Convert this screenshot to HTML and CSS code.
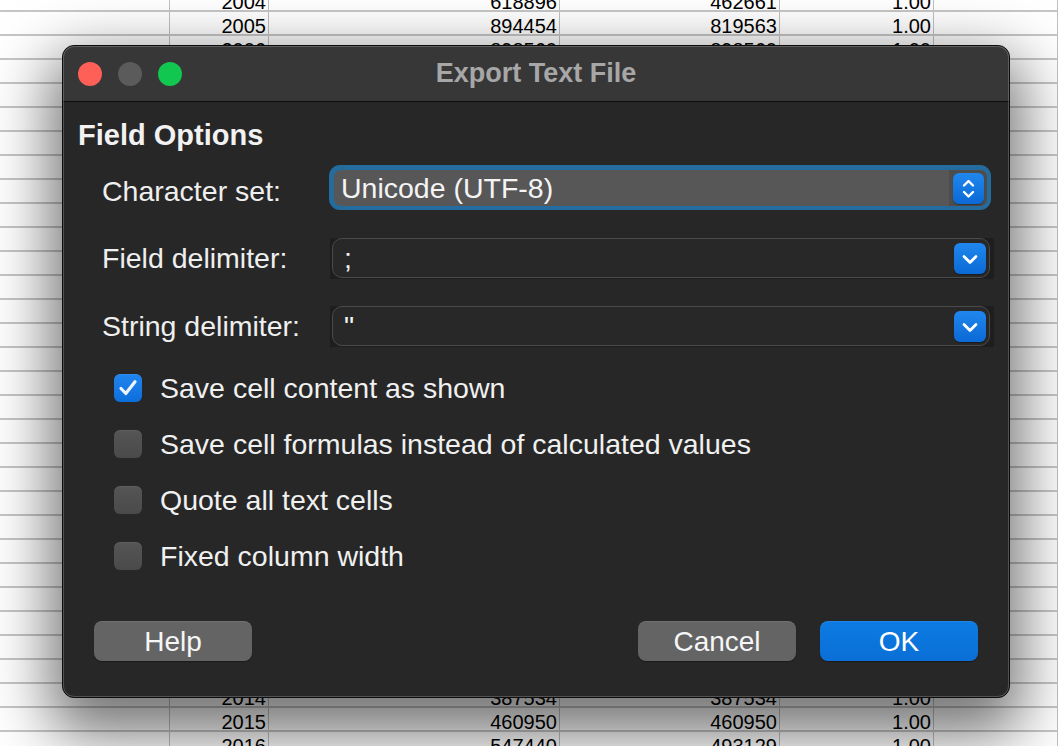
FILE: index.html
```html
<!DOCTYPE html>
<html lang="en">
<head>
<meta charset="utf-8">
<title>Export Text File</title>
<link rel="stylesheet" href="styles.css">
</head>
<body>
<div class="sheet">
  <div class="row"><i></i><i>2004</i><i>618896</i><i>462661</i><i>1.00</i><i></i></div>
  <div class="row"><i></i><i>2005</i><i>894454</i><i>819563</i><i>1.00</i><i></i></div>
  <div class="row"><i></i><i>2006</i><i>898560</i><i>898560</i><i>1.00</i><i></i></div>
  <div class="row"><i></i><i></i><i></i><i></i><i></i><i></i></div>
  <div class="row"><i></i><i></i><i></i><i></i><i></i><i></i></div>
  <div class="row"><i></i><i></i><i></i><i></i><i></i><i></i></div>
  <div class="row"><i></i><i></i><i></i><i></i><i></i><i></i></div>
  <div class="row"><i></i><i></i><i></i><i></i><i></i><i></i></div>
  <div class="row"><i></i><i></i><i></i><i></i><i></i><i></i></div>
  <div class="row"><i></i><i></i><i></i><i></i><i></i><i></i></div>
  <div class="row"><i></i><i></i><i></i><i></i><i></i><i></i></div>
  <div class="row"><i></i><i></i><i></i><i></i><i></i><i></i></div>
  <div class="row"><i></i><i></i><i></i><i></i><i></i><i></i></div>
  <div class="row"><i></i><i></i><i></i><i></i><i></i><i></i></div>
  <div class="row"><i></i><i></i><i></i><i></i><i></i><i></i></div>
  <div class="row"><i></i><i></i><i></i><i></i><i></i><i></i></div>
  <div class="row"><i></i><i></i><i></i><i></i><i></i><i></i></div>
  <div class="row"><i></i><i></i><i></i><i></i><i></i><i></i></div>
  <div class="row"><i></i><i></i><i></i><i></i><i></i><i></i></div>
  <div class="row"><i></i><i></i><i></i><i></i><i></i><i></i></div>
  <div class="row"><i></i><i></i><i></i><i></i><i></i><i></i></div>
  <div class="row"><i></i><i></i><i></i><i></i><i></i><i></i></div>
  <div class="row"><i></i><i></i><i></i><i></i><i></i><i></i></div>
  <div class="row"><i></i><i></i><i></i><i></i><i></i><i></i></div>
  <div class="row"><i></i><i></i><i></i><i></i><i></i><i></i></div>
  <div class="row"><i></i><i></i><i></i><i></i><i></i><i></i></div>
  <div class="row"><i></i><i></i><i></i><i></i><i></i><i></i></div>
  <div class="row"><i></i><i></i><i></i><i></i><i></i><i></i></div>
  <div class="row"><i></i><i></i><i></i><i></i><i></i><i></i></div>
  <div class="row"><i></i><i>2014</i><i>387534</i><i>387534</i><i>1.00</i><i></i></div>
  <div class="row"><i></i><i>2015</i><i>460950</i><i>460950</i><i>1.00</i><i></i></div>
  <div class="row"><i></i><i>2016</i><i>547440</i><i>493129</i><i>1.00</i><i></i></div>
</div>

<div class="dialog">
  <div class="titlebar">
    <div class="lights">
      <span class="light light-red"></span>
      <span class="light light-gray"></span>
      <span class="light light-green"></span>
    </div>
    <div class="title">Export Text File</div>
    <div></div>
  </div>
  <div class="body">
    <h2 class="section">Field Options</h2>
    <div class="form">
      <div class="frow frow-first">
        <label class="flabel flabel-first">Character set:</label>
        <div class="focus-ring">
          <div class="popup-field">
            <span class="ptext">Unicode (UTF-8)</span>
            <span class="stepper-well">
              <span class="bluebtn stepper">
                <svg width="31" height="31" viewBox="0 0 31 31"><path d="M11 12.5 L15.5 8 L20 12.5 M11 19 L15.5 23.5 L20 19" fill="none" stroke="#fff" stroke-width="2.4" stroke-linecap="round" stroke-linejoin="round"/></svg>
              </span>
            </span>
          </div>
        </div>
      </div>
      <div class="frow">
        <label class="flabel">Field delimiter:</label>
        <div class="popup-plain">
          <div class="popup-box">
            <span class="ptext ptext-plain">;</span>
            <span class="bluebtn chevron">
              <svg width="32" height="31" viewBox="0 0 32 31"><path d="M10 13.5 L16 19.5 L22 13.5" fill="none" stroke="#fff" stroke-width="2.8" stroke-linecap="round" stroke-linejoin="round"/></svg>
            </span>
          </div>
        </div>
      </div>
      <div class="frow">
        <label class="flabel">String delimiter:</label>
        <div class="popup-plain">
          <div class="popup-box">
            <span class="ptext ptext-plain">"</span>
            <span class="bluebtn chevron">
              <svg width="32" height="31" viewBox="0 0 32 31"><path d="M10 13.5 L16 19.5 L22 13.5" fill="none" stroke="#fff" stroke-width="2.8" stroke-linecap="round" stroke-linejoin="round"/></svg>
            </span>
          </div>
        </div>
      </div>
    </div>

    <div class="checks">
      <div class="check">
        <span class="box box-on">
          <svg width="28" height="28" viewBox="0 0 28 28"><path d="M7 14.5 L11.8 19.5 L21 7.8" fill="none" stroke="#eef4ff" stroke-width="3.2" stroke-linecap="round" stroke-linejoin="round"/></svg>
        </span>
        <span class="ctext">Save cell content as shown</span>
      </div>
      <div class="check">
        <span class="box"></span>
        <span class="ctext">Save cell formulas instead of calculated values</span>
      </div>
      <div class="check">
        <span class="box"></span>
        <span class="ctext">Quote all text cells</span>
      </div>
      <div class="check">
        <span class="box"></span>
        <span class="ctext">Fixed column width</span>
      </div>
    </div>

    <div class="buttons">
      <button class="btn">Help</button>
      <span class="spacer"></span>
      <button class="btn">Cancel</button>
      <button class="btn btn-primary">OK</button>
    </div>
  </div>
</div>
</body>
</html>
```

FILE: styles.css
```css
html, body {
  margin: 0;
  padding: 0;
}
body {
  width: 1058px;
  height: 746px;
  overflow: hidden;
  background: #ffffff;
  font-family: "Liberation Sans", Arial, sans-serif;
  position: relative;
}

/* spreadsheet behind */
.sheet {
  margin-top: -12px;
}
.row {
  display: grid;
  grid-template-columns: 170px 99px 291px 220px 154px 1fr;
  height: 24px;
  box-sizing: border-box;
  border-bottom: 2px solid #c6c6c6;
}
.row > i {
  font-style: normal;
  border-right: 1px solid #c0c0c0;
  text-align: right;
  padding: 4px 2px 0 0;
  font-size: 20px;
  line-height: 20px;
  color: #000;
  white-space: nowrap;
  overflow: hidden;
}

/* dialog window */
.dialog {
  position: absolute;
  left: 62px;
  top: 45px;
  width: 948px;
  height: 653px;
  box-sizing: border-box;
  border: 1px solid #0c0c0c;
  border-radius: 12px;
  background: #272727;
  overflow: hidden;
  display: flex;
  flex-direction: column;
  box-shadow: 0 24px 60px 12px rgba(0, 0, 0, 0.55);
}
.dialog::after {
  content: "";
  position: absolute;
  inset: 0;
  border-radius: 11px;
  box-shadow: inset 0 0 0 1px rgba(255, 255, 255, 0.2);
  pointer-events: none;
}

.titlebar {
  height: 56px;
  flex: none;
  box-sizing: border-box;
  background: #373737;
  border-bottom: 1px solid #0e0e0e;
  display: grid;
  grid-template-columns: 1fr auto 1fr;
  align-items: center;
  padding-left: 15px;
  padding-right: 15px;
}
.lights {
  display: flex;
  gap: 16px;
}
.light {
  width: 24px;
  height: 24px;
  border-radius: 50%;
}
.light-red { background: #fe5f57; }
.light-gray { background: #5b5b5b; }
.light-green { background: #11c74f; }
.title {
  font-size: 27px;
  font-weight: bold;
  color: #a7a7a7;
  line-height: 32px;
  padding-bottom: 2px;
}

.body {
  padding: 16px 0 0 15px;
  color: #f0f0f0;
}
.section {
  margin: 0;
  font-size: 29px;
  line-height: 34px;
  font-weight: bold;
  color: #f2f2f2;
}

.form {
  margin: 13px 0 0 24px;
  display: flex;
  flex-direction: column;
  gap: 26px;
}
.frow {
  display: flex;
  align-items: flex-start;
  height: 42px;
}
.frow-first {
  height: 46px;
}
.flabel {
  width: 228px;
  flex: none;
  font-size: 28.5px;
  line-height: 32px;
  margin-top: 5px;
  color: #efefef;
  white-space: nowrap;
}
.flabel-first {
  margin-top: 10px;
}

.focus-ring {
  flex: none;
  margin-left: -1px;
  width: 662px;
  height: 45px;
  box-sizing: border-box;
  padding: 5px 4px 4px 5px;
  border-radius: 11px;
  background: #246c9d;
}
.popup-field {
  height: 36px;
  border-radius: 7px;
  background: #575757;
  display: flex;
  align-items: center;
  overflow: hidden;
}
.ptext {
  flex: 1;
  font-size: 28.5px;
  line-height: 32px;
  color: #f4f4f4;
  padding-left: 7px;
  white-space: nowrap;
}
.stepper-well {
  flex: none;
  width: 38px;
  height: 36px;
  background: #4d4d4d;
  display: flex;
  align-items: center;
  justify-content: flex-start;
  padding-left: 4px;
  box-sizing: border-box;
}
.bluebtn {
  flex: none;
  display: flex;
  border-radius: 6px;
  background: linear-gradient(#2087ee, #0b69d5);
  box-shadow: 0 1px 1px rgba(0, 0, 0, 0.35);
}
.stepper {
  width: 31px;
  height: 31px;
}
.chevron {
  width: 32px;
  height: 31px;
  margin-right: 3px;
}

.popup-plain {
  flex: none;
  margin-top: 1px;
  width: 664px;
  height: 41px;
  box-sizing: border-box;
  padding: 0 4px 1px 2px;
  background: #1e1e1e;
}
.popup-box {
  height: 40px;
  box-sizing: border-box;
  border: 1px solid #4a4a4a;
  border-radius: 10px;
  background: #282828;
  display: flex;
  align-items: center;
}
.ptext-plain {
  padding-left: 11px;
}

.checks {
  margin: 27px 0 0 36px;
  display: flex;
  flex-direction: column;
  gap: 28px;
}
.check {
  display: flex;
  align-items: center;
  height: 28px;
}
.box {
  width: 28px;
  height: 28px;
  flex: none;
  box-sizing: border-box;
  border-radius: 6px;
  background: linear-gradient(#555555, #4a4a4a);
  box-shadow: inset 0 1px 0 rgba(255, 255, 255, 0.06);
  display: flex;
}
.box-on {
  background: linear-gradient(#2185ee, #0d6edb);
}
.ctext {
  margin-left: 18px;
  font-size: 28.5px;
  line-height: 32px;
  color: #f0f0f0;
  white-space: nowrap;
}

.buttons {
  margin-top: 51px;
  padding: 0 31px 0 16px;
  display: flex;
  gap: 24px;
}
.spacer {
  flex: 1;
}
.btn {
  flex: none;
  width: 158px;
  height: 40px;
  border: none;
  border-radius: 8px;
  background: #646464;
  box-shadow: inset 0 1px 0 rgba(255, 255, 255, 0.08), 0 1px 1px rgba(0, 0, 0, 0.3);
  color: #f6f6f6;
  font-family: "Liberation Sans", Arial, sans-serif;
  font-size: 28px;
  line-height: 32px;
  padding: 2px 0 0 0;
  margin: 0;
}
.btn-primary {
  background: linear-gradient(#0c7be3, #0a6fd6);
  color: #ffffff;
}
```
